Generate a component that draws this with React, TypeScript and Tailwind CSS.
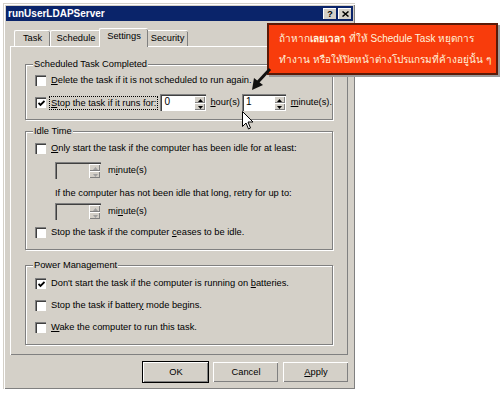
import React, { ReactNode } from "react";

const ui = { fontFamily: '"Liberation Sans", Arial, sans-serif' };

function Check({ checked }: { checked?: boolean }) {
    return (
        <div className="w-[11px] h-[11px] shrink-0 bg-white border-t border-l border-[#808080] border-r-white border-b-white shadow-[inset_1px_1px_0_#404040] flex items-center justify-center">
            {checked && (
                <svg width="7" height="7" viewBox="0 0 7 7">
                    <path d="M0.5 3 L2.5 5 L6.5 1" stroke="#000" strokeWidth="1.8" fill="none" />
                </svg>
            )}
        </div>
    );
}

function SpinArrow({ up, disabled }: { up?: boolean; disabled?: boolean }) {
    return (
        <div className="flex-1 bg-[#d4d0c8] border-t border-l border-white border-r-[#404040] border-b-[#404040] shadow-[inset_-1px_-1px_0_#808080] flex items-center justify-center">
            <svg width="5" height="3" viewBox="0 0 5 3">
                <path d={up ? "M0 3 L2.5 0 L5 3 Z" : "M0 0 L2.5 3 L5 0 Z"} fill={disabled ? "#a0a0a0" : "#000"} />
            </svg>
        </div>
    );
}

function Spin({ value, disabled }: { value?: string; disabled?: boolean }) {
    return (
        <div
            className={
                "w-[46px] h-[17px] flex border-t border-l border-[#808080] border-r-white border-b-white shadow-[inset_1px_1px_0_#404040] " +
                (disabled ? "bg-[#d4d0c8]" : "bg-white")
            }
        >
            <div className="flex-1 pl-[3px] pt-[2px] text-[10px] leading-none">{value}</div>
            <div className="w-[12px] flex flex-col pt-[1px] pr-[1px] pb-[1px]">
                <SpinArrow up disabled={disabled} />
                <SpinArrow disabled={disabled} />
            </div>
        </div>
    );
}

function Group({ title, h, mt, children }: { title: string; h: string; mt: string; children: ReactNode }) {
    return (
        <div className={"relative ml-[14px] w-[308px] border border-[#808080] shadow-[inset_1px_1px_0_#fff,1px_1px_0_#fff] " + h + " " + mt}>
            <span className="absolute left-[7px] -top-[7px] bg-[#d4d0c8] px-[1px] leading-[12px]">{title}</span>
            {children}
        </div>
    );
}

function Row({ checked, mt, children }: { checked?: boolean; mt: string; children: ReactNode }) {
    return (
        <div className={"flex items-center h-[13px] pl-[9px] gap-[5px] " + mt}>
            <Check checked={checked} />
            <span className="whitespace-nowrap">{children}</span>
        </div>
    );
}

function Button({ children, def }: { children: ReactNode; def?: boolean }) {
    return (
        <div
            className={
                "w-[65px] h-[20px] flex items-center justify-center bg-[#d4d0c8] border-t border-l border-white border-r-[#404040] border-b-[#404040] shadow-[inset_-1px_-1px_0_#808080] " +
                (def ? "outline outline-1 outline-black" : "")
            }
        >
            {children}
        </div>
    );
}

function Tab({ label, active, w }: { label: string; active?: boolean; w: string }) {
    return (
        <div
            className={
                "flex items-center justify-center bg-[#d4d0c8] border-t border-l border-white border-r-[#404040] rounded-t-[2px] shadow-[inset_-1px_0_0_#808080] " +
                w +
                (active ? " h-[19px] -mx-[2px] relative z-10 -mb-[1px] pb-[2px]" : " h-[16px]")
            }
        >
            {label}
        </div>
    );
}

export default function App() {
    return (
        <div className="relative w-[500px] h-[394px] bg-white overflow-hidden text-[9.3px] text-black" style={ui}>
            <div className="ml-[3px] pt-[3px]">
                <div className="w-[352px] h-[386px] bg-[#d4d0c8] border-t border-l border-[#d4d0c8] border-r-[#404040] border-b-[#404040] shadow-[inset_1px_1px_0_#fff,inset_-1px_-1px_0_#808080] p-[2px]">
                    {/* title bar */}
                    <div className="h-[15px] bg-[#0a246a] flex items-center justify-between pl-[2px] pr-[2px]">
                        <span className="text-white font-bold text-[10px] leading-none">runUserLDAPServer</span>
                        <div className="flex gap-[2px]">
                            <div className="w-[13px] h-[11px] bg-[#d4d0c8] border-t border-l border-white border-r-[#404040] border-b-[#404040] flex items-center justify-center text-[9px] font-bold leading-none">?</div>
                            <div className="w-[13px] h-[11px] bg-[#d4d0c8] border-t border-l border-white border-r-[#404040] border-b-[#404040] flex items-center justify-center">
                                <svg width="7" height="6" viewBox="0 0 7 6">
                                    <path d="M0.5 0.5 L6.5 5.5 M6.5 0.5 L0.5 5.5" stroke="#000" strokeWidth="1.5" />
                                </svg>
                            </div>
                        </div>
                    </div>

                    {/* tabs */}
                    <div className="flex items-end h-[21px] mt-[4px] ml-[6px] pl-[2px]">
                        <Tab label="Task" w="w-[36px]" />
                        <Tab label="Schedule" w="w-[51px]" />
                        <Tab label="Settings" w="w-[49px]" active />
                        <Tab label="Security" w="w-[42px]" />
                    </div>

                    {/* panel */}
                    <div className="ml-[4px] w-[338px] h-[309px] border-t border-l border-white border-r-[#404040] border-b-[#404040] shadow-[inset_-1px_-1px_0_#808080] pt-[1px]">
                        <Group title="Scheduled Task Completed" h="h-[56px]" mt="mt-[16px]">
                            <Row mt="mt-[9px]">
                                <span><u>D</u>elete the task if it is not scheduled to run again.</span>
                            </Row>
                            <div className="flex items-center h-[17px] mt-[7px] pl-[9px]">
                                <Check checked />
                                <span className="ml-[3px] px-[1px] border border-dotted border-black whitespace-nowrap leading-[12px]">
                                    <u>S</u>top the task if it runs for:
                                </span>
                                <div className="ml-[2px]"><Spin value="0" /></div>
                                <span className="ml-[4px] mr-[2px]"><u>h</u>our(s)</span>
                                <Spin value="1" />
                                <span className="ml-[5px]"><u>m</u>inute(s).</span>
                            </div>
                        </Group>

                        <Group title="Idle Time" h="h-[119px]" mt="mt-[11px]">
                            <Row mt="mt-[10px]">
                                <span><u>O</u>nly start the task if the computer has been idle for at least:</span>
                            </Row>
                            <div className="flex items-center h-[17px] mt-[7px] pl-[29px] gap-[7px]">
                                <Spin disabled />
                                <span>m<u>i</u>nute(s)</span>
                            </div>
                            <div className="h-[13px] mt-[8px] pl-[29px] flex items-center whitespace-nowrap">
                                If the computer has not been idle that long, retry for up to:
                            </div>
                            <div className="flex items-center h-[17px] mt-[3px] pl-[29px] gap-[7px]">
                                <Spin disabled />
                                <span>mi<u>n</u>ute(s)</span>
                            </div>
                            <Row mt="mt-[6px]">
                                <span>Stop the task if the computer <u>c</u>eases to be idle.</span>
                            </Row>
                        </Group>

                        <Group title="Power Management" h="h-[80px]" mt="mt-[15px]">
                            <Row checked mt="mt-[11px]">
                                <span>Don't start the task if the computer is running on <u>b</u>atteries.</span>
                            </Row>
                            <Row mt="mt-[9px]">
                                <span>Stop the task if batter<u>y</u> mode begins.</span>
                            </Row>
                            <Row mt="mt-[9px]">
                                <span><u>W</u>ake the computer to run this task.</span>
                            </Row>
                        </Group>
                    </div>

                    {/* buttons */}
                    <div className="flex justify-end gap-[5px] mt-[7px] pr-[5px]">
                        <Button def>OK</Button>
                        <Button>Cancel</Button>
                        <Button><span><u>A</u>pply</span></Button>
                    </div>
                </div>
            </div>

            {/* annotation callout */}
            <div className="absolute left-[267px] top-[23px] w-[231px] h-[52px] bg-[#f83c0c] border-2 border-[#5a1a08] shadow-[2px_2px_0_#9a9a9a] px-[10px] pt-[3px] text-[#fff3dc] text-[10px] leading-[21px]">
                <div className="whitespace-nowrap">ถ้าหาก<b>เลยเวลา</b> ที่ให้ Schedule Task หยุดการ</div>
                <div className="whitespace-nowrap">ทำงาน หรือให้ปิดหน้าต่างโปรแกรมที่ค้างอยู่นั้น ๆ</div>
            </div>

            {/* arrow */}
            <svg className="absolute left-[244px] top-[66px]" width="32" height="30" viewBox="0 0 32 30">
                <path d="M26 3 L13 17" stroke="#111" strokeWidth="3" />
                <path d="M8 24 L10 12 L19 19 Z" fill="#111" />
            </svg>

            {/* mouse cursor */}
            <svg className="absolute left-[242px] top-[111px]" width="12" height="19" viewBox="0 0 12 19">
                <path d="M0.5 0.5 L0.5 15.5 L4 12 L6.5 18 L8.5 17 L6 11 L11 11 Z" fill="#fff" stroke="#000" strokeWidth="1" />
            </svg>
        </div>
    );
}
